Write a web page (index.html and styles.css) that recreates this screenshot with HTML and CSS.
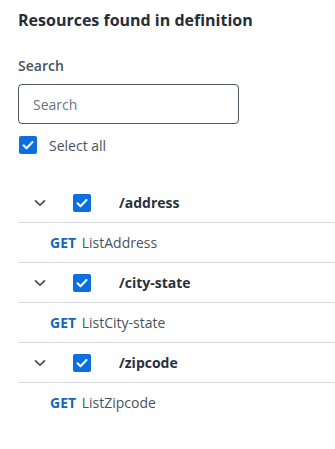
FILE: index.html
```html
<!DOCTYPE html>
<html lang="en">
<head>
  <meta charset="UTF-8">
  <meta name="viewport" content="width=device-width, initial-scale=1.0">
  <title>Resources found in definition</title>
  <link rel="stylesheet" href="styles.css">
</head>
<body>
  <div class="panel">
    <div class="panel-title">Resources found in definition</div>

    <div class="search-group">
      <label for="search">Search</label>
      <input type="text" id="search" placeholder="Search">
    </div>

    <label class="select-all">
      <span class="check">
        <svg viewBox="0 0 18 18" width="18" height="18"><path d="M4.5 9.2l3 3 6-6.2" fill="none" stroke="#fff" stroke-width="2" stroke-linecap="round" stroke-linejoin="round"/></svg>
      </span>
      Select all
    </label>

    <div class="resources">
      <div class="resource-row">
        <span class="chevron">
          <svg viewBox="0 0 12 8" width="12" height="8"><path d="M1.5 1.8l4.5 4.4 4.5-4.4" fill="none" stroke="#4b5563" stroke-width="1.8" stroke-linecap="round" stroke-linejoin="round"/></svg>
        </span>
        <span class="check">
          <svg viewBox="0 0 18 18" width="18" height="18"><path d="M4.5 9.2l3 3 6-6.2" fill="none" stroke="#fff" stroke-width="2" stroke-linecap="round" stroke-linejoin="round"/></svg>
        </span>
        <span class="path">/address</span>
      </div>
      <div class="method-row"><span class="method">GET</span> ListAddress</div>

      <div class="resource-row">
        <span class="chevron">
          <svg viewBox="0 0 12 8" width="12" height="8"><path d="M1.5 1.8l4.5 4.4 4.5-4.4" fill="none" stroke="#4b5563" stroke-width="1.8" stroke-linecap="round" stroke-linejoin="round"/></svg>
        </span>
        <span class="check">
          <svg viewBox="0 0 18 18" width="18" height="18"><path d="M4.5 9.2l3 3 6-6.2" fill="none" stroke="#fff" stroke-width="2" stroke-linecap="round" stroke-linejoin="round"/></svg>
        </span>
        <span class="path">/city-state</span>
      </div>
      <div class="method-row"><span class="method">GET</span> ListCity-state</div>

      <div class="resource-row">
        <span class="chevron">
          <svg viewBox="0 0 12 8" width="12" height="8"><path d="M1.5 1.8l4.5 4.4 4.5-4.4" fill="none" stroke="#4b5563" stroke-width="1.8" stroke-linecap="round" stroke-linejoin="round"/></svg>
        </span>
        <span class="check">
          <svg viewBox="0 0 18 18" width="18" height="18"><path d="M4.5 9.2l3 3 6-6.2" fill="none" stroke="#fff" stroke-width="2" stroke-linecap="round" stroke-linejoin="round"/></svg>
        </span>
        <span class="path">/zipcode</span>
      </div>
      <div class="method-row last"><span class="method">GET</span> ListZipcode</div>
    </div>
  </div>
</body>
</html>
```

FILE: styles.css
```css
body {
  margin: 0;
  font-family: "Open Sans", "Noto Sans", sans-serif;
  color: #333b47;
  background: #fff;
}
.panel {
  padding: 9px 0 0 18px;
}
.panel-title {
  font-size: 16px;
  font-weight: bold;
  line-height: 22px;
  color: #262d37;
}
.search-group {
  margin-top: 25px;
}
.search-group label {
  display: block;
  font-size: 14px;
  font-weight: 600;
  line-height: 20px;
  color: #4a525d;
  margin-bottom: 8px;
}
.search-group input {
  box-sizing: border-box;
  width: 221px;
  height: 40px;
  padding: 0 14px;
  border: 1px solid #4b5563;
  border-radius: 4px;
  font-family: inherit;
  font-size: 14px;
  color: #333b47;
}
.search-group input::placeholder {
  color: #6d7480;
}
.select-all {
  display: flex;
  align-items: center;
  gap: 12px;
  margin-top: 12px;
  height: 18px;
  font-size: 14px;
  color: #4a525d;
  padding-left: 1px;
}
.check {
  display: inline-flex;
  width: 18px;
  height: 18px;
  border-radius: 2px;
  background: #0b6fde;
  flex-shrink: 0;
}
.resources {
  margin-top: 29px;
}
.resource-row {
  display: flex;
  align-items: center;
  height: 39px;
  border-bottom: 1px solid #d6dae0;
}
.chevron {
  display: inline-flex;
  width: 12px;
  margin-left: 16px;
}
.resource-row .check {
  margin-left: 27px;
}
.path {
  margin-left: 28px;
  font-size: 14px;
  font-weight: bold;
  color: #2a313b;
}
.method-row {
  height: 39px;
  line-height: 39px;
  padding-left: 32px;
  font-size: 14px;
  color: #4a525d;
  border-bottom: 1px solid #d6dae0;
}
.method-row.last {
  border-bottom: none;
}
.method {
  font-weight: bold;
  color: #1a66b8;
  margin-right: 2px;
}
```
